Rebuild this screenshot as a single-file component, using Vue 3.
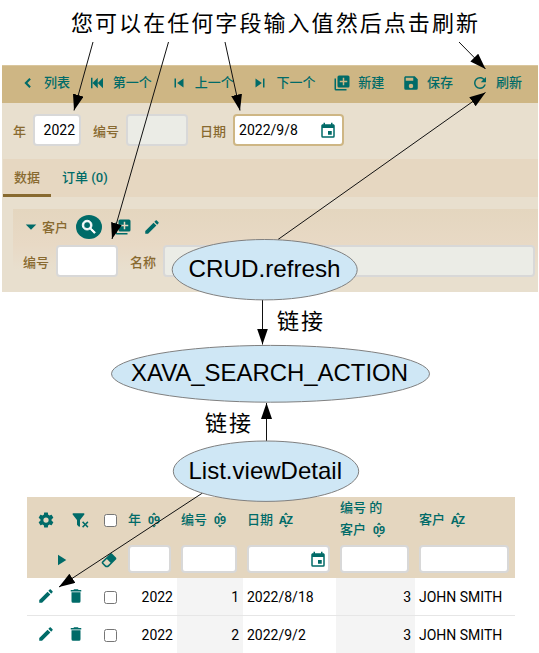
<script setup>
import { h } from 'vue'

const paths = {
  back: 'M15.8,16.6L11.2,12L15.8,7.4L13.8,5.4L7.2,12L13.8,18.6Z',
  first: 'M20,5V19L13,12M6,5V19H4V5M13,5V19L6,12',
  previous: 'M6,18V6H8V18H6M9.5,12L18,6V18L9.5,12Z',
  next: 'M16,18H18V6H16M6,18L14.5,12L6,6V18Z',
  add: 'M19,11H15V15H13V11H9V9H13V5H15V9H19M20,2H8A2,2 0 0,0 6,4V16A2,2 0 0,0 8,18H20A2,2 0 0,0 22,16V4A2,2 0 0,0 20,2M4,6H2V20A2,2 0 0,0 4,22H18V20H4V6Z',
  save: 'M15,9H5V5H15M12,19A3,3 0 0,1 9,16A3,3 0 0,1 12,13A3,3 0 0,1 15,16A3,3 0 0,1 12,19M17,3H5C3.89,3 3,3.9 3,5V19A2,2 0 0,0 5,21H19A2,2 0 0,0 21,19V7L17,3Z',
  refresh: 'M17.65,6.35C16.2,4.9 14.21,4 12,4A8,8 0 0,0 4,12A8,8 0 0,0 12,20C15.73,20 18.84,17.45 19.73,14H17.65C16.83,16.33 14.61,18 12,18A6,6 0 0,1 6,12A6,6 0 0,1 12,6C13.66,6 15.14,6.69 16.22,7.78L13,11H20V4L17.65,6.35Z',
  calendar: 'M19,19H5V8H19M16,1V3H8V1H6V3H5C3.89,3 3,3.89 3,5V19A2,2 0 0,0 5,21H19A2,2 0 0,0 21,19V5C21,3.89 20.1,3 19,3H18V1M17,12H12V17H17V12Z',
  caret: 'M5,8.5L12,15.5L19,8.5H5Z',
  search: 'M9.5,3A6.5,6.5 0 0,1 16,9.5C16,11.11 15.41,12.59 14.44,13.73L14.71,14H15.5L20.5,19L19,20.5L14,15.5V14.71L13.73,14.44C12.59,15.41 11.11,16 9.5,16A6.5,6.5 0 0,1 3,9.5A6.5,6.5 0 0,1 9.5,3M9.5,5C7,5 5,7 5,9.5C5,12 7,14 9.5,14C12,14 14,12 14,9.5C14,7 12,5 9.5,5Z',
  pencil: 'M20.71,7.04C21.1,6.65 21.1,6 20.71,5.63L18.37,3.29C18,2.9 17.35,2.9 16.96,3.29L15.12,5.12L18.87,8.87M3,17.25V21H6.75L17.81,9.93L14.06,6.18L3,17.25Z',
  cog: 'M12,15.5A3.5,3.5 0 0,1 8.5,12A3.5,3.5 0 0,1 12,8.5A3.5,3.5 0 0,1 15.5,12A3.5,3.5 0 0,1 12,15.5M19.43,12.97C19.47,12.65 19.5,12.33 19.5,12C19.5,11.67 19.47,11.34 19.43,11L21.54,9.37C21.73,9.22 21.78,8.95 21.66,8.73L19.66,5.27C19.54,5.05 19.27,4.96 19.05,5.05L16.56,6.05C16.04,5.66 15.5,5.32 14.87,5.07L14.5,2.42C14.46,2.18 14.25,2 14,2H10C9.75,2 9.54,2.18 9.5,2.42L9.13,5.07C8.5,5.32 7.96,5.66 7.44,6.05L4.95,5.05C4.73,4.96 4.46,5.05 4.34,5.27L2.34,8.73C2.21,8.95 2.27,9.22 2.46,9.37L4.57,11C4.53,11.34 4.5,11.67 4.5,12C4.5,12.33 4.53,12.65 4.57,12.97L2.46,14.63C2.27,14.78 2.21,15.05 2.34,15.27L4.34,18.73C4.46,18.95 4.73,19.03 4.95,18.95L7.44,17.94C7.96,18.34 8.5,18.68 9.13,18.93L9.5,21.58C9.54,21.82 9.75,22 10,22H14C14.25,22 14.46,21.82 14.5,21.58L14.87,18.93C15.5,18.67 16.04,18.34 16.56,17.94L19.05,18.95C19.27,19.03 19.54,18.95 19.66,18.73L21.66,15.27C21.78,15.05 21.73,14.78 21.54,14.63L19.43,12.97Z',
  filter: 'M14.76,20.83L17.6,18L14.76,15.17L16.17,13.76L19,16.57L21.83,13.76L23.24,15.17L20.43,18L23.24,20.83L21.83,22.24L19,19.4L16.17,22.24L14.76,20.83M12,12V19.88C12.04,20.18 11.94,20.5 11.71,20.71C11.32,21.1 10.69,21.1 10.3,20.71L8.29,18.7C8.06,18.47 7.96,18.16 8,17.87V12H7.97L2.21,4.62C1.87,4.19 1.95,3.56 2.38,3.22C2.57,3.08 2.78,3 3,3H17C17.22,3 17.43,3.08 17.62,3.22C18.05,3.56 18.13,4.19 17.79,4.62L12.03,12H12Z',
  trash: 'M19,4H15.5L14.5,3H9.5L8.5,4H5V6H19M6,19A2,2 0 0,0 8,21H16A2,2 0 0,0 18,19V7H6V19Z',
  eraser: 'M16.24,3.56L21.19,8.5C21.97,9.29 21.97,10.55 21.19,11.34L12,20.53C10.44,22.09 7.91,22.09 6.34,20.53L2.81,17C2.03,16.21 2.03,14.95 2.81,14.16L13.41,3.56C14.2,2.78 15.46,2.78 16.24,3.56M4.22,15.58L7.76,19.11C8.54,19.9 9.8,19.9 10.59,19.11L14.12,15.58L9.17,10.63L4.22,15.58Z',
  play: 'M8,5.14V19.14L19,12.14',
}

const Icon = (props) =>
  h('svg', { viewBox: '0 0 24 24', width: 18, height: 18, fill: 'currentColor' }, [
    h('path', { d: paths[props.name] }),
  ])
Icon.props = ['name']

// Column sort mark: two characters between an up and a down triangle
const Sort = (props) =>
  h('svg', { viewBox: '0 0 16 18', width: 16, height: 18, fill: 'currentColor' }, [
    h('path', { d: 'M5.8 3.8L8 1.6L10.2 3.8ZM5.8 14.2L8 16.4L10.2 14.2Z' }),
    h(
      'text',
      {
        x: 8, y: 12.8, 'text-anchor': 'middle', 'font-size': 10.5, 'font-weight': 700,
        'font-family': 'Noto Sans, sans-serif',
        textLength: props.kind === 'AZ' ? 14 : 12, lengthAdjust: 'spacingAndGlyphs',
      },
      props.kind
    ),
  ])
Sort.props = ['kind']

const actions = [
  { icon: 'back', label: '列表' },
  { icon: 'first', label: '第一个' },
  { icon: 'previous', label: '上一个' },
  { icon: 'next', label: '下一个' },
  { icon: 'add', label: '新建' },
  { icon: 'save', label: '保存' },
  { icon: 'refresh', label: '刷新' },
]

const rows = [
  { year: 2022, number: 1, date: '2022/8/18', customer: 3, name: 'JOHN SMITH' },
  { year: 2022, number: 2, date: '2022/9/2', customer: 3, name: 'JOHN SMITH' },
]

const arrows = [
  [93, 42, 74, 110.5],
  [168.5, 42, 112, 239],
  [225, 42, 240, 110.5],
  [459, 42, 485.5, 69],
  [278, 239.5, 485.5, 92.5],
  [262.5, 300, 262.5, 344.5],
  [266.5, 441, 266.5, 403],
  [202.5, 493, 59, 587],
]

const nodes = [
  { cx: 264.7, cy: 269.7, rx: 92.5, ry: 30.2, text: 'CRUD.refresh', base: 277, x: 188.5, w: 152 },
  { cx: 270.5, cy: 373.8, rx: 159, ry: 28.4, text: 'XAVA_SEARCH_ACTION', base: 381, x: 131, w: 277 },
  { cx: 266, cy: 471.2, rx: 92.7, ry: 30.2, text: 'List.viewDetail', base: 479, x: 188.5, w: 153.5 },
]
</script>

<template>
  <main class="page">
    <section class="detail">
      <nav class="toolbar">
        <a v-for="a in actions" :key="a.icon" class="action"><Icon :name="a.icon" />{{ a.label }}</a>
      </nav>
      <div class="fields">
        <label>年</label><span class="input year">2022</span>
        <label>编号</label><span class="input number disabled"></span>
        <label>日期</label><span class="input date focused">2022/9/8<Icon name="calendar" /></span>
      </div>
      <div class="tabs">
        <span class="tab active">数据</span>
        <span class="tab">订单 (0)</span>
      </div>
      <div class="frame">
        <div class="frame-head">
          <Icon name="caret" class="caret" />
          <label>客户</label>
          <span class="round"><Icon name="search" /></span>
          <Icon name="add" class="add" />
          <Icon name="pencil" />
        </div>
        <div class="frame-fields">
          <label>编号</label><span class="input number"></span>
          <label>名称</label><span class="input name disabled"></span>
        </div>
      </div>
    </section>

    <section class="list">
      <div class="row head">
        <div class="cell tools"><Icon name="cog" /><Icon name="filter" class="filter" /><i class="check"></i></div>
        <div class="cell">年<Sort kind="09" /></div>
        <div class="cell">编号<Sort kind="09" /></div>
        <div class="cell">日期<Sort kind="AZ" /></div>
        <div class="cell two"><span>编号 的</span><span class="line">客户<Sort kind="09" /></span></div>
        <div class="cell">客户<Sort kind="AZ" /></div>
      </div>
      <div class="row filters">
        <div class="cell tools"><Icon name="play" class="play" /><Icon name="eraser" class="eraser" /></div>
        <div class="cell"><span class="input"></span></div>
        <div class="cell"><span class="input"></span></div>
        <div class="cell"><span class="input calendar"><Icon name="calendar" /></span></div>
        <div class="cell"><span class="input"></span></div>
        <div class="cell"><span class="input"></span></div>
      </div>
      <div v-for="r in rows" :key="r.number" class="row data">
        <div class="cell tools"><Icon name="pencil" /><Icon name="trash" class="trash" /><i class="check"></i></div>
        <div class="cell num">{{ r.year }}</div>
        <div class="cell num shade">{{ r.number }}</div>
        <div class="cell">{{ r.date }}</div>
        <div class="cell num shade">{{ r.customer }}</div>
        <div class="cell">{{ r.name }}</div>
      </div>
    </section>

    <svg class="diagram" viewBox="0 0 539 653" width="539" height="653">
      <defs>
        <marker id="head" markerUnits="userSpaceOnUse" markerWidth="17" markerHeight="12" refX="16" refY="5.5" orient="auto">
          <path d="M0 0L16 5.5L0 11Z" />
        </marker>
      </defs>
      <line v-for="(a, i) in arrows" :key="i" :x1="a[0]" :y1="a[1]" :x2="a[2]" :y2="a[3]" stroke="#111" marker-end="url(#head)" />
      <g v-for="n in nodes" :key="n.text">
        <ellipse :cx="n.cx" :cy="n.cy" :rx="n.rx" :ry="n.ry" />
        <text class="node" :x="n.x" :y="n.base" :textLength="n.w" lengthAdjust="spacingAndGlyphs">{{ n.text }}</text>
      </g>
      <text class="note" x="71" y="30.5" textLength="407">您可以在任何字段输入值然后点击刷新</text>
      <text class="note" x="277" y="328.5" textLength="46">链接</text>
      <text class="note" x="205" y="430.5" textLength="46">链接</text>
    </svg>
  </main>
</template>

<style>
body {
  margin: 0;
  background: #fff;
}
</style>

<style scoped>
.page {
  position: relative;
  box-sizing: border-box;
  width: 539px;
  height: 653px;
  padding: 65px 1px 0 2px;
  overflow: hidden;
  font: 500 13px/20px Roboto, "Noto Sans CJK SC", sans-serif;
  color: #006b68;
}
svg {
  display: block;
  flex: none;
}
.detail {
  height: 227px;
  background: #e8dfce;
}
.toolbar {
  box-sizing: border-box;
  display: flex;
  gap: 17.8px;
  align-items: center;
  height: 38px;
  padding: 0 0 4px 17px;
  background: #ceb684;
  border-top: 1px solid #d9c69d;
  white-space: nowrap;
}
.action {
  display: flex;
  align-items: center;
  gap: 7px;
}
.fields,
.frame-fields {
  display: flex;
  align-items: center;
}
.fields {
  height: 56px;
  padding-left: 11px;
  box-sizing: border-box;
  padding-bottom: 3px;
}
label {
  color: #886a30;
  white-space: nowrap;
}
.fields label,
.frame-fields label {
  margin-right: 7px;
  padding-top: 4px;
}
.input {
  box-sizing: border-box;
  display: flex;
  align-items: center;
  height: 32px;
  margin-right: 12px;
  padding: 0 4px;
  border: 2px solid #d8d8d8;
  border-radius: 4px;
  background: #fff;
  color: #000;
  font-size: 14px;
  font-weight: 400;
}
.year {
  width: 48px;
  justify-content: flex-end;
}
.number {
  width: 62px;
}
.date {
  width: 111px;
  justify-content: space-between;
}
.date svg {
  margin: 3px 1px 0 0;
  color: #006b68;
}
.input.disabled {
  background: #ebece6;
}
.input.focused {
  border-color: #ceb684;
}
.tabs {
  display: flex;
  height: 38px;
  margin-left: 1px;
  background: #e6d7c1;
}
.tab {
  box-sizing: border-box;
  height: 38px;
  padding: 0 11px;
  line-height: 38px;
}
.tab.active {
  color: #886a30;
  border-bottom: 3px solid #886a30;
}
.frame {
  box-sizing: border-box;
  height: 71px;
  margin: 12px 0 0 11px;
  padding-top: 5px;
  background: linear-gradient(#e4d6bf, #e8d9c5 50%, #e8dfce 85%);
}
.frame-head {
  display: flex;
  align-items: center;
  height: 26px;
  padding-left: 9px;
}
.frame-head label {
  padding-top: 2px;
}
.caret {
  margin-right: 2px;
}
.round {
  box-sizing: border-box;
  display: flex;
  align-items: center;
  justify-content: center;
  width: 26px;
  height: 24px;
  margin: 0 12px 0 8px;
  border-radius: 50%;
  background: #006b68;
  color: #fff;
}
.round svg {
  stroke: currentColor;
  stroke-width: 1.2px;
}
.add {
  margin-right: 11px;
}
.frame-fields {
  height: 32px;
  margin-top: 5px;
  padding-left: 10px;
}
.frame-fields .name {
  width: 372px;
  margin: 0;
}
.list {
  width: 488px;
  margin: 205px 0 0 25px;
}
.row {
  display: grid;
  grid-template-columns: 97px 53px 66px 93px 79px 100px;
}
.cell {
  box-sizing: border-box;
  display: flex;
  align-items: center;
  padding: 0 4px;
  white-space: nowrap;
}
.cell.tools {
  padding: 0 0 0 10px;
}
.head,
.filters {
  background: #e4d6bf;
}
.head {
  height: 46px;
}
.head .cell:not(.tools) > svg,
.line svg {
  margin-left: 5px;
}
.head .two {
  flex-direction: column;
  align-items: flex-start;
  justify-content: center;
  line-height: 22px;
  margin-top: -2px;
}
.line {
  display: flex;
  align-items: center;
}
.tools .filter {
  margin-left: 16px;
}
.check {
  box-sizing: border-box;
  width: 13px;
  height: 13px;
  border: 1px solid #767676;
  border-radius: 2.5px;
  background: #fff;
}
.filter + .check {
  margin-left: 15px;
}
.data .check {
  margin-top: 2px;
}
.trash {
  margin-left: 11.5px;
}
.trash + .check {
  margin-left: 19.5px;
}
.play {
  margin-left: 15px;
}
.eraser {
  margin-left: 30px;
}
.filters {
  height: 35px;
}
.filters .cell:not(.tools) {
  padding-bottom: 5px;
  align-items: flex-end;
}
.filters .tools {
  padding-bottom: 2px;
}
.filters .input {
  flex: 1;
  height: 28px;
  margin-right: 2px;
}
.filters .calendar {
  justify-content: flex-end;
  padding: 2px 1px 0 0;
  color: #006b68;
}
.data {
  box-sizing: border-box;
  height: 38px;
  border-bottom: 1px solid #e6e6e6;
}
.data .cell {
  color: #000;
  font-size: 14px;
  font-weight: 400;
}
.data .tools {
  color: #006b68;
}
.data .tools svg {
  margin-top: -1px;
}
.num {
  justify-content: flex-end;
}
.shade {
  background: #f4f4f4;
}
.diagram {
  position: absolute;
  top: 0;
  left: 0;
}
ellipse {
  fill: #cfe7f5;
  stroke: #808080;
}
.node {
  fill: #000;
  font: 400 24px "Liberation Sans", Arial, sans-serif;
}
.note {
  fill: #000;
  font: 400 22px KaiTi, "Noto Sans CJK SC", sans-serif;
}
</style>
